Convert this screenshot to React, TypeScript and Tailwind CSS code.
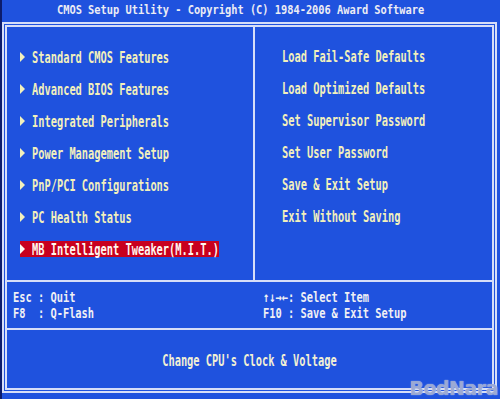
import React from "react";

const mono = "font-['DejaVu_Sans_Mono','Liberation_Mono',monospace] font-bold";

function Arrow({ color }: { color: string }) {
  return (
    <svg width="5" height="10" viewBox="0 0 5 10" className="shrink-0">
      <polygon points="0,0 5,5 0,10" fill={color} />
    </svg>
  );
}

const left = [
  "Standard CMOS Features",
  "Advanced BIOS Features",
  "Integrated Peripherals",
  "Power Management Setup",
  "PnP/PCI Configurations",
  "PC Health Status",
];

const right = [
  "Load Fail-Safe Defaults",
  "Load Optimized Defaults",
  "Set Supervisor Password",
  "Set User Password",
  "Save & Exit Setup",
  "Exit Without Saving",
];

function Txt({ children, cls = "" }: { children: React.ReactNode; cls?: string }) {
  return (
    <span
      className={`${mono} inline-block whitespace-pre origin-left scale-x-[0.69] text-[15px] leading-4 ${cls}`}
    >
      {children}
    </span>
  );
}

function Key({ children }: { children: React.ReactNode }) {
  return (
    <span
      className={`${mono} inline-block whitespace-pre origin-left scale-x-[0.74] text-[14px] leading-[15px] text-[#f0f0f4]`}
    >
      {children}
    </span>
  );
}

export default function App() {
  return (
    <div className="relative w-[500px] h-[399px] overflow-hidden bg-[#1f52de] border-l-2 border-[#0c1c6c] flex flex-col">
      {/* Title */}
      <div className="h-[22px] flex items-center pl-[55px] pb-[3px]">
        <span
          className={`${mono} inline-block whitespace-pre origin-left scale-x-[0.795] text-[13px] leading-4 text-[#ececf4]`}
        >
          CMOS Setup Utility - Copyright (C) 1984-2006 Award Software
        </span>
      </div>

      {/* Main box */}
      <div className="w-[495px] h-[371px] border-[5px] border-double border-[#d6def8] flex flex-col">
        {/* Menus */}
        <div className="h-[255px] shrink-0 flex border-b-2 border-[#d6def8]">
          <div className="w-[248px] border-r-2 border-[#d6def8] pt-[22px] pl-[13px] flex flex-col gap-4">
            {left.map((t) => (
              <div key={t} className="h-4 flex items-center">
                <Arrow color="#f2f0bc" />
                <span className="ml-[7px]">
                  <Txt cls="text-[#f2f0bc]">{t}</Txt>
                </span>
              </div>
            ))}
            <div className="h-4 w-[199px] bg-[#c8001e] flex items-center">
              <Arrow color="#fff8f0" />
              <span className="ml-[7px]">
                <Txt cls="text-[#fff6ee]">MB Intelligent Tweaker(M.I.T.)</Txt>
              </span>
            </div>
          </div>
          <div className="flex-1 pt-[22px] pl-[27px] flex flex-col gap-4">
            {right.map((t) => (
              <div key={t} className="h-4 flex items-center">
                <Txt cls="text-[#f2f0bc]">{t}</Txt>
              </div>
            ))}
          </div>
        </div>

        {/* Keys */}
        <div className="h-[48px] shrink-0 border-b-2 border-[#d6def8] pt-[7px] pl-[6px] grid grid-cols-[250px_1fr]">
          <div className="flex flex-col">
            <div className="h-4 flex items-center">
              <Key>Esc : Quit</Key>
            </div>
            <div className="h-4 flex items-center">
              <Key>F8  : Q-Flash</Key>
            </div>
          </div>
          <div className="flex flex-col">
            <div className="h-4 flex items-center">
              <Key>↑↓→←: Select Item</Key>
            </div>
            <div className="h-4 flex items-center">
              <Key>F10 : Save &amp; Exit Setup</Key>
            </div>
          </div>
        </div>

        {/* Help */}
        <div className="flex-1 flex items-center justify-center pt-[3px]">
          <span
            className={`${mono} inline-block whitespace-pre origin-center scale-x-[0.69] text-[15px] leading-4 text-[#f2f0d4]`}
          >
            Change CPU's Clock &amp; Voltage
          </span>
        </div>
      </div>

      {/* Watermark */}
      <div className="absolute right-[2px] bottom-[-3px] font-['DejaVu_Sans','Liberation_Sans',sans-serif] font-bold text-[19px] tracking-[-0.5px] text-[#8a9ac8]/80 [text-shadow:0_0_1px_#e0e6ff]">
        BodNara
      </div>
    </div>
  );
}
